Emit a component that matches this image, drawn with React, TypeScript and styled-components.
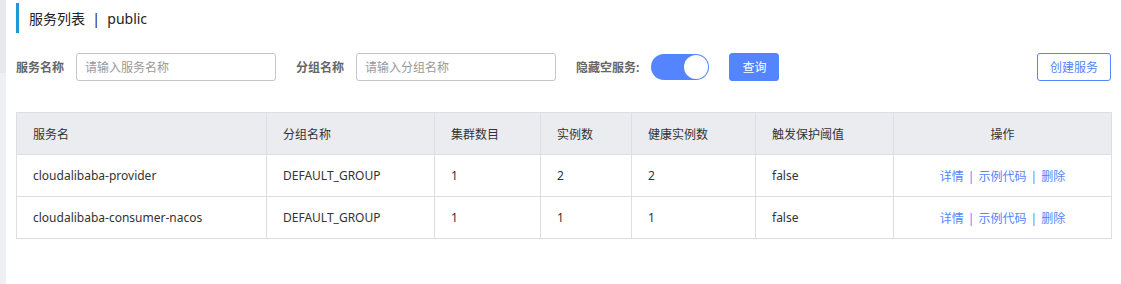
import React from 'react';
import styled, { createGlobalStyle } from 'styled-components';

const blue = '#5584ff';
const border = '#dcdee3';
const text = '#333333';

const GlobalStyle = createGlobalStyle`
  *, *::before, *::after {
    box-sizing: border-box;
  }
  html, body {
    margin: 0;
    padding: 0;
    background: #ffffff;
  }
  body {
    font-family: "Noto Sans", "Noto Sans CJK SC", sans-serif;
    font-size: 12px;
    color: ${text};
  }
`;

const Page = styled.div`
  display: flex;
  width: 1121px;
  height: 284px;
  overflow: hidden;
`;

const Sidebar = styled.div`
  width: 6px;
  flex-shrink: 0;
  display: flex;
  flex-direction: column;
`;

const SidebarTop = styled.div`
  height: 73px;
  background: #e6e8ec;
`;

const SidebarRest = styled.div`
  flex: 1;
  background: #eef0f3;
`;

const Main = styled.div`
  flex: 1;
  min-width: 0;
  padding: 3px 10px 0 10px;
`;

const Title = styled.div`
  height: 30px;
  border-left: 3px solid #1a9ad6;
  padding-left: 10px;
  display: flex;
  align-items: center;
  font-size: 14px;
  color: #222;
  white-space: pre;
`;

const FilterRow = styled.div`
  display: flex;
  align-items: center;
  height: 28px;
  margin-top: 20px;
`;

const Label = styled.label`
  font-weight: bold;
  color: #666;
  margin-right: 12px;
`;

const Input = styled.input`
  width: 200px;
  height: 28px;
  border: 1px solid #c4c6cf;
  border-radius: 3px;
  padding: 0 8px;
  font-family: inherit;
  font-size: 12px;
  margin-right: 20px;
  outline: none;
  &::placeholder {
    color: #999;
  }
`;

const Switch = styled.div<{ on: boolean }>`
  width: 58px;
  height: 26px;
  border-radius: 13px;
  background: ${(p) => (p.on ? blue : '#ccc')};
  padding: 1px;
  display: flex;
  justify-content: ${(p) => (p.on ? 'flex-end' : 'flex-start')};
  margin-right: 20px;
`;

const Knob = styled.div`
  width: 24px;
  height: 24px;
  border-radius: 50%;
  background: #fff;
`;

const Button = styled.button<{ primary?: boolean }>`
  height: 28px;
  padding: 0 12px;
  border-radius: 3px;
  font-family: inherit;
  font-size: 12px;
  border: 1px solid ${blue};
  background: ${(p) => (p.primary ? blue : '#fff')};
  color: ${(p) => (p.primary ? '#fff' : blue)};
  cursor: pointer;
`;

const Spacer = styled.div`
  flex: 1;
`;

const Table = styled.table`
  margin-top: 31px;
  width: 1095px;
  border-collapse: collapse;
  table-layout: fixed;
`;

const Th = styled.th<{ w: number; center?: boolean }>`
  width: ${(p) => p.w}px;
  height: 42px;
  background: #ebecf0;
  border: 1px solid ${border};
  font-weight: normal;
  text-align: ${(p) => (p.center ? 'center' : 'left')};
  padding: 0 16px;
  color: ${text};
`;

const Td = styled.td<{ center?: boolean }>`
  height: 42px;
  border: 1px solid ${border};
  padding: 0 16px;
  text-align: ${(p) => (p.center ? 'center' : 'left')};
  color: ${text};
  white-space: nowrap;
`;

const Link = styled.a`
  color: ${blue};
  text-decoration: none;
`;

const Sep = styled.span`
  color: ${blue};
  margin: 0 4px;
`;

const columns = [
  { title: '服务名', w: 250 },
  { title: '分组名称', w: 168 },
  { title: '集群数目', w: 106 },
  { title: '实例数', w: 91 },
  { title: '健康实例数', w: 124 },
  { title: '触发保护阈值', w: 138 },
  { title: '操作', w: 218, center: true },
];

const rows = [
  { name: 'cloudalibaba-provider', group: 'DEFAULT_GROUP', clusters: 1, instances: 2, healthy: 2, threshold: 'false' },
  { name: 'cloudalibaba-consumer-nacos', group: 'DEFAULT_GROUP', clusters: 1, instances: 1, healthy: 1, threshold: 'false' },
];

const App = () => (
  <>
    <GlobalStyle />
    <Page>
      <Sidebar>
        <SidebarTop />
        <SidebarRest />
      </Sidebar>
      <Main>
        <Title>服务列表  |  public</Title>
        <FilterRow>
          <Label>服务名称</Label>
          <Input placeholder="请输入服务名称" />
          <Label>分组名称</Label>
          <Input placeholder="请输入分组名称" />
          <Label>隐藏空服务:</Label>
          <Switch on>
            <Knob />
          </Switch>
          <Button primary>查询</Button>
          <Spacer />
          <Button>创建服务</Button>
        </FilterRow>
        <Table>
          <thead>
            <tr>
              {columns.map((c) => (
                <Th key={c.title} w={c.w} center={c.center}>
                  {c.title}
                </Th>
              ))}
            </tr>
          </thead>
          <tbody>
            {rows.map((r) => (
              <tr key={r.name}>
                <Td>{r.name}</Td>
                <Td>{r.group}</Td>
                <Td>{r.clusters}</Td>
                <Td>{r.instances}</Td>
                <Td>{r.healthy}</Td>
                <Td>{r.threshold}</Td>
                <Td center>
                  <Link>详情</Link>
                  <Sep>|</Sep>
                  <Link>示例代码</Link>
                  <Sep>|</Sep>
                  <Link>删除</Link>
                </Td>
              </tr>
            ))}
          </tbody>
        </Table>
      </Main>
    </Page>
  </>
);

export default App;
